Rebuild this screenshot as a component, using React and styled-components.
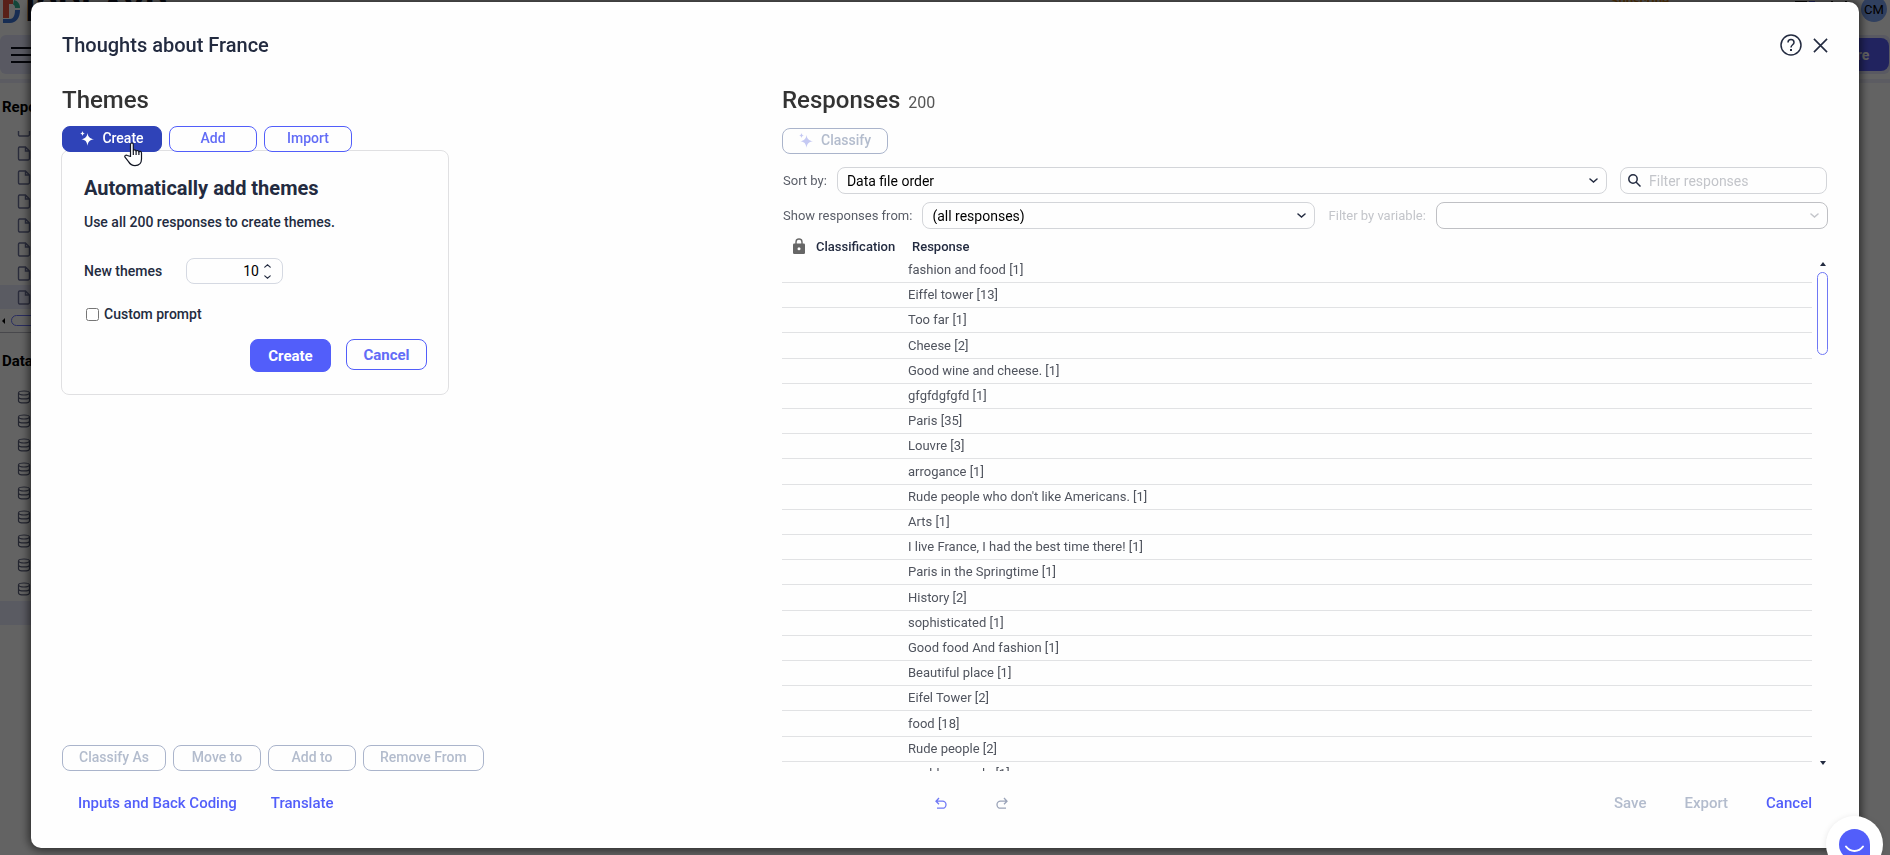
import React from 'react';
import styled, { createGlobalStyle, css } from 'styled-components';

const GlobalStyle = createGlobalStyle`
* {
  box-sizing: border-box;
}
html, body, #root {
  height: 100%;
}
body {
  margin: 0;
  overflow: hidden;
  background-color: #ffffff;
  color: #232b40;
  font-family: Roboto, 'Liberation Sans', sans-serif;
  font-size: 14px;
}
button, input, select {
  font-family: inherit;
}
h1, h2, h3, p, ul {
  margin: 0;
  padding: 0;
}
`;

/* ---------- page behind the dialog ---------- */

const Page = styled.div`
height: 100%;
display: flex;
flex-direction: column;
overflow: hidden;
`;

const TopBar = styled.header`
display: flex;
align-items: center;
flex: none;
height: 52px;
margin-top: -17px;
padding: 0 3px;
`;

const Logo = styled.div`
display: flex;
align-items: center;
gap: 4px;
color: #14182a;
font-size: 36px;
font-weight: 700;
line-height: 36px;
svg {
  flex: none;
}
`;

const TopBarRight = styled.div`
display: flex;
align-items: center;
gap: 14px;
margin-left: auto;
`;

const Subscribe = styled.a`
color: #f59a23;
font-size: 13px;
font-weight: 700;
text-decoration: none;
margin: 0 110px 18px 0;
`;

const Avatar = styled.span`
display: flex;
align-items: center;
justify-content: center;
width: 26px;
height: 26px;
border-radius: 50%;
background-color: #7da4f5;
color: #000000;
font-size: 13px;
`;

const MenuBar = styled.div`
display: flex;
align-items: center;
justify-content: space-between;
flex: none;
height: 39px;
padding: 0 1px 0 11px;
border-radius: 6px;
background-color: #e4e6fb;
`;

const MenuButton = styled.button`
display: flex;
padding: 0;
border: 0;
background: none;
`;

const ShareButton = styled.button`
width: 76px;
height: 33px;
border: 0;
border-radius: 8px;
background-color: #565cf5;
color: #ffffff;
font-size: 14px;
font-weight: 700;
`;

const Strip = styled.div`
flex: none;
height: 9px;
border-bottom: 4px solid #eeeefc;
`;

const Sidebar = styled.aside`
width: 220px;
padding-top: 14px;
`;

const SidebarTitle = styled.h2`
padding-left: 2px;
color: #000000;
font-size: 15px;
font-weight: 700;
line-height: 20px;
`;

const Tree = styled.ul`
list-style: none;
overflow: hidden;
display: flex;
flex-direction: column;
justify-content: flex-end;
height: ${({ $height }) => $height}px;
margin-top: 14px;
`;

const TreeItem = styled.li`
display: flex;
align-items: center;
flex: none;
height: 24px;
padding-left: 17px;
background-color: ${({ $selected }) => ($selected ? '#e8e9fb' : 'transparent')};
`;

const TreeScroll = styled.div`
display: flex;
align-items: center;
gap: 6px;
height: 24px;
padding-left: 2px;
border-bottom: 1px solid #b9b9c4;
margin-bottom: 18px;
`;

const TreeThumb = styled.div`
width: 90px;
height: 11px;
border: 1px solid #6b74f8;
border-radius: 6px;
`;

const Overlay = styled.div`
position: fixed;
inset: 0;
display: flex;
padding: 2px 31px 7px;
background-color: rgba(0, 0, 0, 0.61);
`;

/* ---------- dialog ---------- */

const Dialog = styled.section`
flex: 1;
min-width: 0;
display: flex;
flex-direction: column;
padding: 0 31px 13px;
border-radius: 10px;
background-color: #fefefe;
box-shadow: 0 0 10px 2px rgba(0, 0, 0, 0.6);
`;

const DialogHeader = styled.header`
display: flex;
align-items: center;
gap: 11px;
flex: none;
height: 86px;
h1 {
  flex: 1;
  font-size: 20px;
  font-weight: 500;
}
`;

const IconButton = styled.button`
display: flex;
padding: 0;
border: 0;
background: none;
color: ${({ disabled }) => (disabled ? '#9aa3b8' : 'inherit')};
`;

const Columns = styled.div`
flex: 1;
min-height: 0;
display: grid;
grid-template-columns: minmax(0, 720fr) minmax(0, 1046fr);
`;

const Column = styled.div`
position: relative;
display: flex;
flex-direction: column;
min-height: 0;
`;

const SectionTitle = styled.h2`
display: flex;
align-items: baseline;
gap: 8px;
flex: none;
height: 24px;
color: #333333;
font-size: 24px;
font-weight: 500;
line-height: 24px;
span {
  color: #555555;
  font-size: 16px;
  font-weight: 400;
}
`;

const ButtonRow = styled.div`
position: relative;
z-index: 1;
display: flex;
gap: 7px;
margin-top: ${({ $top }) => $top};
`;

const Button = styled.button`
display: flex;
align-items: center;
justify-content: center;
gap: 8px;
min-width: 88px;
height: 26px;
padding: 0 16px 2px;
border: 1px solid #525efa;
border-radius: 8px;
background-color: #fefefe;
color: #626cf6;
font-size: 14px;
font-weight: 500;
white-space: nowrap;
${({ $active }) => $active && css`
  min-width: 100px;
  border-color: #2f43b8;
  background-color: #2f43b8;
  color: #ffffff;
`}
&:disabled {
  border-color: #aab4cb;
  color: #b3bccd;
}
`;

const Popup = styled.form`
position: absolute;
top: 62px;
left: -1px;
width: 388px;
padding: 24px 21px 22px 22px;
border: 1px solid #e0e0e2;
border-radius: 8px;
background-color: #fefefe;
h3 {
  font-size: 20px;
  font-weight: 700;
  line-height: 26px;
}
p {
  margin-top: 10px;
  font-size: 14px;
  font-weight: 500;
  line-height: 22px;
}
`;

const Field = styled.div`
display: flex;
align-items: center;
margin-top: 25px;
label {
  width: 102px;
  font-weight: 500;
}
`;

const NumberBox = styled.div`
display: flex;
align-items: center;
width: 97px;
height: 26px;
padding-right: 11px;
border: 1px solid #d5d9e2;
border-radius: 8px;
input {
  flex: 1;
  min-width: 0;
  padding: 0 5px 0 0;
  border: 0;
  outline: 0;
  background: none;
  color: #000000;
  font-size: 14px;
  text-align: right;
}
`;

const Spinner = styled.div`
display: flex;
flex-direction: column;
gap: 7px;
`;

const CheckLabel = styled.label`
display: flex;
align-items: center;
gap: 5px;
height: 20px;
margin-top: 20px;
font-weight: 500;
input {
  width: 13px;
  height: 13px;
  margin: 0 0 0 2px;
}
`;

const PopupButtons = styled.div`
display: flex;
justify-content: flex-end;
align-items: flex-start;
gap: 15px;
margin-top: 15px;
`;

const PopupButton = styled.button`
width: 81px;
height: ${({ $primary }) => ($primary ? 33 : 31)}px;
border: 1px solid #525efa;
border-radius: 8px;
background-color: ${({ $primary }) => ($primary ? '#525efa' : '#fefefe')};
color: ${({ $primary }) => ($primary ? '#ffffff' : '#626cf6')};
font-size: 15px;
font-weight: 700;
`;

const Pointer = styled.svg`
position: absolute;
z-index: 2;
top: 54px;
left: 62px;
`;

const FilterRow = styled.div`
display: flex;
align-items: center;
gap: 10px;
flex: none;
margin-top: ${({ $top }) => $top}px;
color: #5a5e68;
font-size: 13px;
label {
  flex: none;
  padding-left: 1px;
}
`;

const FilterLabel = styled.label`
margin-left: 3px;
color: #c3c5ca;
`;

const SelectBox = styled.div`
flex: 1;
min-width: 0;
display: grid;
align-items: center;
color: ${({ $disabled }) => ($disabled ? '#c3c5ca' : '#232b40')};
select, svg {
  grid-area: 1 / 1;
}
svg {
  justify-self: end;
  margin-right: 9px;
  pointer-events: none;
}
select {
  width: 100%;
  height: 27px;
  padding: 0 24px 0 9px;
  border: 1px solid ${({ $disabled }) => ($disabled ? '#bfc0c4' : '#d3d5d9')};
  border-radius: 8px;
  background-color: #fefefe;
  color: #000000;
  font-size: 14px;
  appearance: none;
  opacity: 1;
}
`;

const SearchBox = styled.div`
display: flex;
align-items: center;
gap: 8px;
width: 207px;
height: 27px;
margin: 0 1px 0 3px;
padding: 0 7px;
border: 1px solid #d3d5d9;
border-radius: 8px;
color: #232b40;
input {
  flex: 1;
  min-width: 0;
  padding: 0;
  border: 0;
  outline: 0;
  background: none;
  font-size: 14px;
  &::placeholder {
    color: #c3c5ca;
  }
}
`;

const Results = styled.div`
flex: 1;
min-height: 0;
display: flex;
gap: 5px;
overflow: hidden;
`;

const ResponseTable = styled.table`
flex: 1;
align-self: flex-start;
table-layout: fixed;
border-spacing: 0;
th {
  height: 29px;
  padding: 5px 0 0;
  font-size: 13px;
  font-weight: 500;
  text-align: left;
}
th:first-child {
  width: 34px;
  padding: 4px 0 0 11px;
}
th:nth-child(2) {
  width: 92px;
}
th:last-child {
  padding-left: 4px;
}
th svg {
  display: block;
}
`;

const ResponseRow = styled.tr`
td {
  height: 25px;
  padding: 0;
  border-bottom: 1px solid #e1e2e4;
  color: #50545e;
  font-size: 13px;
  line-height: 20px;
}
&:nth-child(5n + 4) td {
  height: 26px;
}
`;

const Scroll = styled.div`
display: flex;
flex-direction: column;
align-items: center;
flex: none;
width: 11px;
padding: 33px 0 6px;
svg:last-child {
  margin-top: auto;
}
`;

const Thumb = styled.div`
width: 11px;
height: 83px;
margin-top: 6px;
border: 1px solid #6f78f5;
border-radius: 6px;
`;

const DialogFooter = styled.footer`
display: grid;
grid-template-columns: minmax(0, 720fr) minmax(0, 1046fr);
flex: none;
height: 64px;
`;

const FooterGroup = styled.div`
display: flex;
align-items: center;
gap: ${({ $gap }) => $gap}px;
padding: 0 16px;
`;

const History = styled.div`
display: flex;
gap: 49px;
margin: 0 auto 0 137px;
color: #6f78f5;
`;

const TextButton = styled.button`
padding: 0;
border: 0;
background: none;
color: #525efa;
font-size: 15px;
font-weight: 500;
&:disabled {
  color: #b3bccd;
}
`;

const ChatButton = styled.button`
position: fixed;
right: 7px;
bottom: -18px;
display: flex;
align-items: center;
justify-content: center;
width: 57px;
height: 57px;
padding: 0;
border: 0;
border-radius: 50%;
background-color: #ffffff;
box-shadow: 0 1px 6px rgba(0, 0, 0, 0.1);
`;

const Sparkle = ({ color }) => (
  <svg width="14" height="15" viewBox="0 0 14 15" fill={color} aria-hidden="true">
    <path d="M7.500 2c.8 4.200 2 5.400 6.500 6.200-4.500.8-5.700 2-6.500 6.600-.8-4.600-2-5.800-6.200-6.600C5.500 7.400 6.700 6.200 7.500 2z" />
    <path d="M2.500 0c.4 1.700.8 2.100 2.500 2.500-1.700.4-2.100.8-2.500 2.500C2.100 3.300 1.700 2.900 0 2.500 1.700 2.100 2.100 1.700 2.500 0z" />
  </svg>
);

const Chevron = ({ up, small }) => (
  <svg width={small ? 7 : 9} height={small ? 4 : 5} viewBox="0 0 9 5" fill="none" stroke="currentColor" strokeWidth="1.500" strokeLinecap="round">
    <path d={up ? 'M1 4l3.500-3 3.500 3' : 'M1 1l3.500 3 3.500-3'} />
  </svg>
);

const FileIcon = () => (
  <svg width="14" height="15" viewBox="0 0 14 15" fill="none" stroke="#6c7298" strokeWidth="1.400" aria-hidden="true">
    <path d="M2.500 1h6l4 4v7.500a1.500 1.500 0 0 1-1.500 1.500H2.500A1.500 1.500 0 0 1 1.500 12.500v-10A1.500 1.500 0 0 1 2.500 1zM8.500 1v4h4" />
  </svg>
);

const DataIcon = () => (
  <svg width="14" height="14" viewBox="0 0 14 14" fill="none" stroke="#5a5f7a" strokeWidth="1.200" aria-hidden="true">
    <ellipse cx="7" cy="3" rx="5.500" ry="2" />
    <path d="M1.500 3v8c0 2.600 11 2.600 11 0V3M1.500 7c0 2.600 11 2.600 11 0" />
  </svg>
);

const UndoIcon = ({ flip }) => (
  <svg width="12" height="13" viewBox="0 0 12 13" fill="none" stroke="currentColor" strokeWidth="1.300" aria-hidden="true">
    <g transform={flip ? 'translate(12 0) scale(-1 1)' : undefined}>
      <path d="M4 1L1 4.200l3 3M1 4.200h6.500a3.500 3.500 0 0 1 0 7H2" />
    </g>
  </svg>
);

const Arrow = ({ down }) => (
  <svg width="6" height="4" viewBox="0 0 6 4" fill="#232b40" aria-hidden="true">
    <path d={down ? 'M0 0h6L3 4z' : 'M0 4h6L3 0z'} />
  </svg>
);

const responses = [
  ['fashion and food', 1],
  ['Eiffel tower', 13],
  ['Too far', 1],
  ['Cheese', 2],
  ['Good wine and cheese.', 1],
  ['gfgfdgfgfd', 1],
  ['Paris', 35],
  ['Louvre', 3],
  ['arrogance', 1],
  ["Rude people who don't like Americans.", 1],
  ['Arts', 1],
  ['I live France, I had the best time there!', 1],
  ['Paris in the Springtime', 1],
  ['History', 2],
  ['sophisticated', 1],
  ['Good food And fashion', 1],
  ['Beautiful place', 1],
  ['Eifel Tower', 2],
  ['food', 18],
  ['Rude people', 2],
  ['snobby people', 1],
];

const Background = () => (
  <Page aria-hidden="true">
    <TopBar>
      <Logo>
        <svg width="18" height="30" viewBox="0 0 18 30">
          <path d="M0 4h10v6H6v14H0z" fill="#e5543f" />
          <path d="M11 6c4 1 6 4 6 8h-5c0-2-.5-3-2-3.500z" fill="#35b597" />
          <path d="M17 16c0 8-4 13-10 13H0v-4h7c3 0 5-3 5-9z" fill="#3d74d6" />
        </svg>
        ISPLAYR
      </Logo>
      <TopBarRight>
        <Subscribe href="#subscribe">Subscribe</Subscribe>
        <svg width="24" height="16" viewBox="0 0 24 16">
          <path d="M2 0h12v4H2z" fill="#111" />
          <circle cx="19" cy="1" r="3" fill="#525efa" />
        </svg>
        <svg width="16" height="16" viewBox="0 0 16 16">
          <path d="M1 1a7 7 0 0 1 14 0" fill="none" stroke="#111" strokeWidth="2" />
        </svg>
        <Avatar>CM</Avatar>
      </TopBarRight>
    </TopBar>
    <MenuBar>
      <MenuButton aria-label="Menu">
        <svg width="26" height="16" viewBox="0 0 26 16" stroke="#0c0f1c" strokeWidth="2">
          <path d="M0 1h26M0 8h26M0 15h26" />
        </svg>
      </MenuButton>
      <ShareButton>Share</ShareButton>
    </MenuBar>
    <Strip />
    <Sidebar>
      <SidebarTitle>Reports</SidebarTitle>
      <Tree $height={178}>
        {[0, 1, 2, 3, 4, 5, 6, 7].map((n) => (
          <TreeItem key={n} $selected={n === 7}><FileIcon /></TreeItem>
        ))}
      </Tree>
      <TreeScroll>
        <svg width="3" height="6" viewBox="0 0 3 6"><path d="M3 0v6L0 3z" /></svg>
        <TreeThumb />
      </TreeScroll>
      <SidebarTitle>Data</SidebarTitle>
      <Tree $height={240}>
        {[0, 1, 2, 3, 4, 5, 6, 7, 8].map((n) => (
          <TreeItem key={n}><DataIcon /></TreeItem>
        ))}
        <TreeItem $selected />
      </Tree>
    </Sidebar>
  </Page>
);

const CreatePopup = () => (
  <Popup onSubmit={(e) => e.preventDefault()}>
    <h3>Automatically add themes</h3>
    <p>Use all 200 responses to create themes.</p>
    <Field>
      <label htmlFor="new-themes">New themes</label>
      <NumberBox>
        <input id="new-themes" type="text" inputMode="numeric" defaultValue="10" />
        <Spinner>
          <IconButton type="button" aria-label="More"><Chevron up small /></IconButton>
          <IconButton type="button" aria-label="Fewer"><Chevron small /></IconButton>
        </Spinner>
      </NumberBox>
    </Field>
    <CheckLabel>
      <input type="checkbox" />
      Custom prompt
    </CheckLabel>
    <PopupButtons>
      <PopupButton type="submit" $primary>Create</PopupButton>
      <PopupButton type="button">Cancel</PopupButton>
    </PopupButtons>
  </Popup>
);

const ThemesPanel = () => (
  <Column>
    <SectionTitle>Themes</SectionTitle>
    <CreatePopup />
    <ButtonRow $top="14px">
      <Button $active><Sparkle color="#ffffff" />Create</Button>
      <Button>Add</Button>
      <Button>Import</Button>
    </ButtonRow>
    <ButtonRow $top="auto">
      <Button disabled>Classify As</Button>
      <Button disabled>Move to</Button>
      <Button disabled>Add to</Button>
      <Button disabled>Remove From</Button>
    </ButtonRow>
    <Pointer width="20" height="25" viewBox="0 0 20 25" fill="#ffffff" stroke="#111522" strokeWidth="1.200" strokeLinejoin="round">
      <path d="M6.500 14.500V2.500c0-2 2.800-2 2.800 0v6.200c.3-1.200 2.600-1.200 2.800.5.400-1.100 2.600-.9 2.800.7.500-.9 2.600-.7 2.600 1.200v6c0 4-2.500 6.500-6.500 6.500-3.200 0-5-1.500-6.500-4L1 15.200c-.8-1.500 1-2.800 2.300-1.700z" />
      <path d="M9.300 8.700V13M12.100 9.200V13M14.900 9.900V13" />
    </Pointer>
  </Column>
);

const ResponsesPanel = () => (
  <Column>
    <SectionTitle>Responses<span>200</span></SectionTitle>
    <ButtonRow $top="16px">
      <Button disabled><Sparkle color="#c5c9f3" />Classify</Button>
    </ButtonRow>
    <FilterRow $top={13}>
      <label htmlFor="sort">Sort by:</label>
      <SelectBox>
        <select id="sort"><option>Data file order</option></select>
        <Chevron />
      </SelectBox>
      <SearchBox>
        <svg width="13" height="13" viewBox="0 0 13 13" fill="none" stroke="currentColor" strokeWidth="1.500" aria-hidden="true">
          <circle cx="5" cy="5" r="4.200" />
          <path d="M8 8l4.500 4.500" />
        </svg>
        <input type="text" placeholder="Filter responses" aria-label="Filter responses" />
      </SearchBox>
    </FilterRow>
    <FilterRow $top={8}>
      <label htmlFor="from">Show responses from:</label>
      <SelectBox>
        <select id="from"><option>(all responses)</option></select>
        <Chevron />
      </SelectBox>
      <FilterLabel htmlFor="variable">Filter by variable:</FilterLabel>
      <SelectBox $disabled>
        <select id="variable" disabled />
        <Chevron />
      </SelectBox>
    </FilterRow>
    <Results>
      <ResponseTable>
        <thead>
          <tr>
            <th aria-label="Locked">
              <svg width="12" height="16" viewBox="0 0 12 16" aria-hidden="true">
                <path d="M3 6V4a3 3 0 0 1 6 0v2" fill="none" stroke="#666666" strokeWidth="1.400" />
                <rect y="5.500" width="12" height="10.500" rx="1.200" fill="#666666" />
                <circle cx="6" cy="10.700" r="1.500" fill="#fefefe" />
              </svg>
            </th>
            <th>Classification</th>
            <th>Response</th>
          </tr>
        </thead>
        <tbody>
          {responses.map(([text, count]) => (
            <ResponseRow key={text}>
              <td />
              <td />
              <td>{`${text} [${count}]`}</td>
            </ResponseRow>
          ))}
        </tbody>
      </ResponseTable>
      <Scroll>
        <Arrow />
        <Thumb />
        <Arrow down />
      </Scroll>
    </Results>
  </Column>
);

const App = () => (
  <>
    <GlobalStyle />
    <Background />
    <Overlay>
      <Dialog role="dialog" aria-label="Thoughts about France">
        <DialogHeader>
          <h1>Thoughts about France</h1>
          <IconButton aria-label="Help">
            <svg width="22" height="22" viewBox="0 0 22 22" fill="none" stroke="#232b40" strokeWidth="1.500">
              <circle cx="11" cy="11" r="10" />
              <path d="M8 8.500c0-4 6-4 6 0 0 2.200-3 2.300-3 5" />
              <path d="M11 15v2" strokeWidth="2" />
            </svg>
          </IconButton>
          <IconButton aria-label="Close">
            <svg width="15" height="15" viewBox="0 0 16 16" fill="none" stroke="#232b40" strokeWidth="1.700">
              <path d="M1 1l14 14M15 1L1 15" />
            </svg>
          </IconButton>
        </DialogHeader>
        <Columns>
          <ThemesPanel />
          <ResponsesPanel />
        </Columns>
        <DialogFooter>
          <FooterGroup $gap={34}>
            <TextButton>Inputs and Back Coding</TextButton>
            <TextButton>Translate</TextButton>
          </FooterGroup>
          <FooterGroup $gap={38}>
            <History>
              <IconButton aria-label="Undo"><UndoIcon /></IconButton>
              <IconButton aria-label="Redo" disabled><UndoIcon flip /></IconButton>
            </History>
            <TextButton disabled>Save</TextButton>
            <TextButton disabled>Export</TextButton>
            <TextButton>Cancel</TextButton>
          </FooterGroup>
        </DialogFooter>
      </Dialog>
    </Overlay>
    <ChatButton aria-label="Open chat">
      <svg width="31" height="31" viewBox="0 0 31 31" aria-hidden="true">
        <path d="M15.500 0A15.500 15.500 0 0 1 31 15.500V31H15.500a15.500 15.500 0 0 1 0-31z" fill="#525efa" />
        <path d="M7 17.500c4.500 6 12.500 6 17 0" fill="none" stroke="#ffffff" strokeWidth="2" strokeLinecap="round" />
      </svg>
    </ChatButton>
  </>
);

export default App;
